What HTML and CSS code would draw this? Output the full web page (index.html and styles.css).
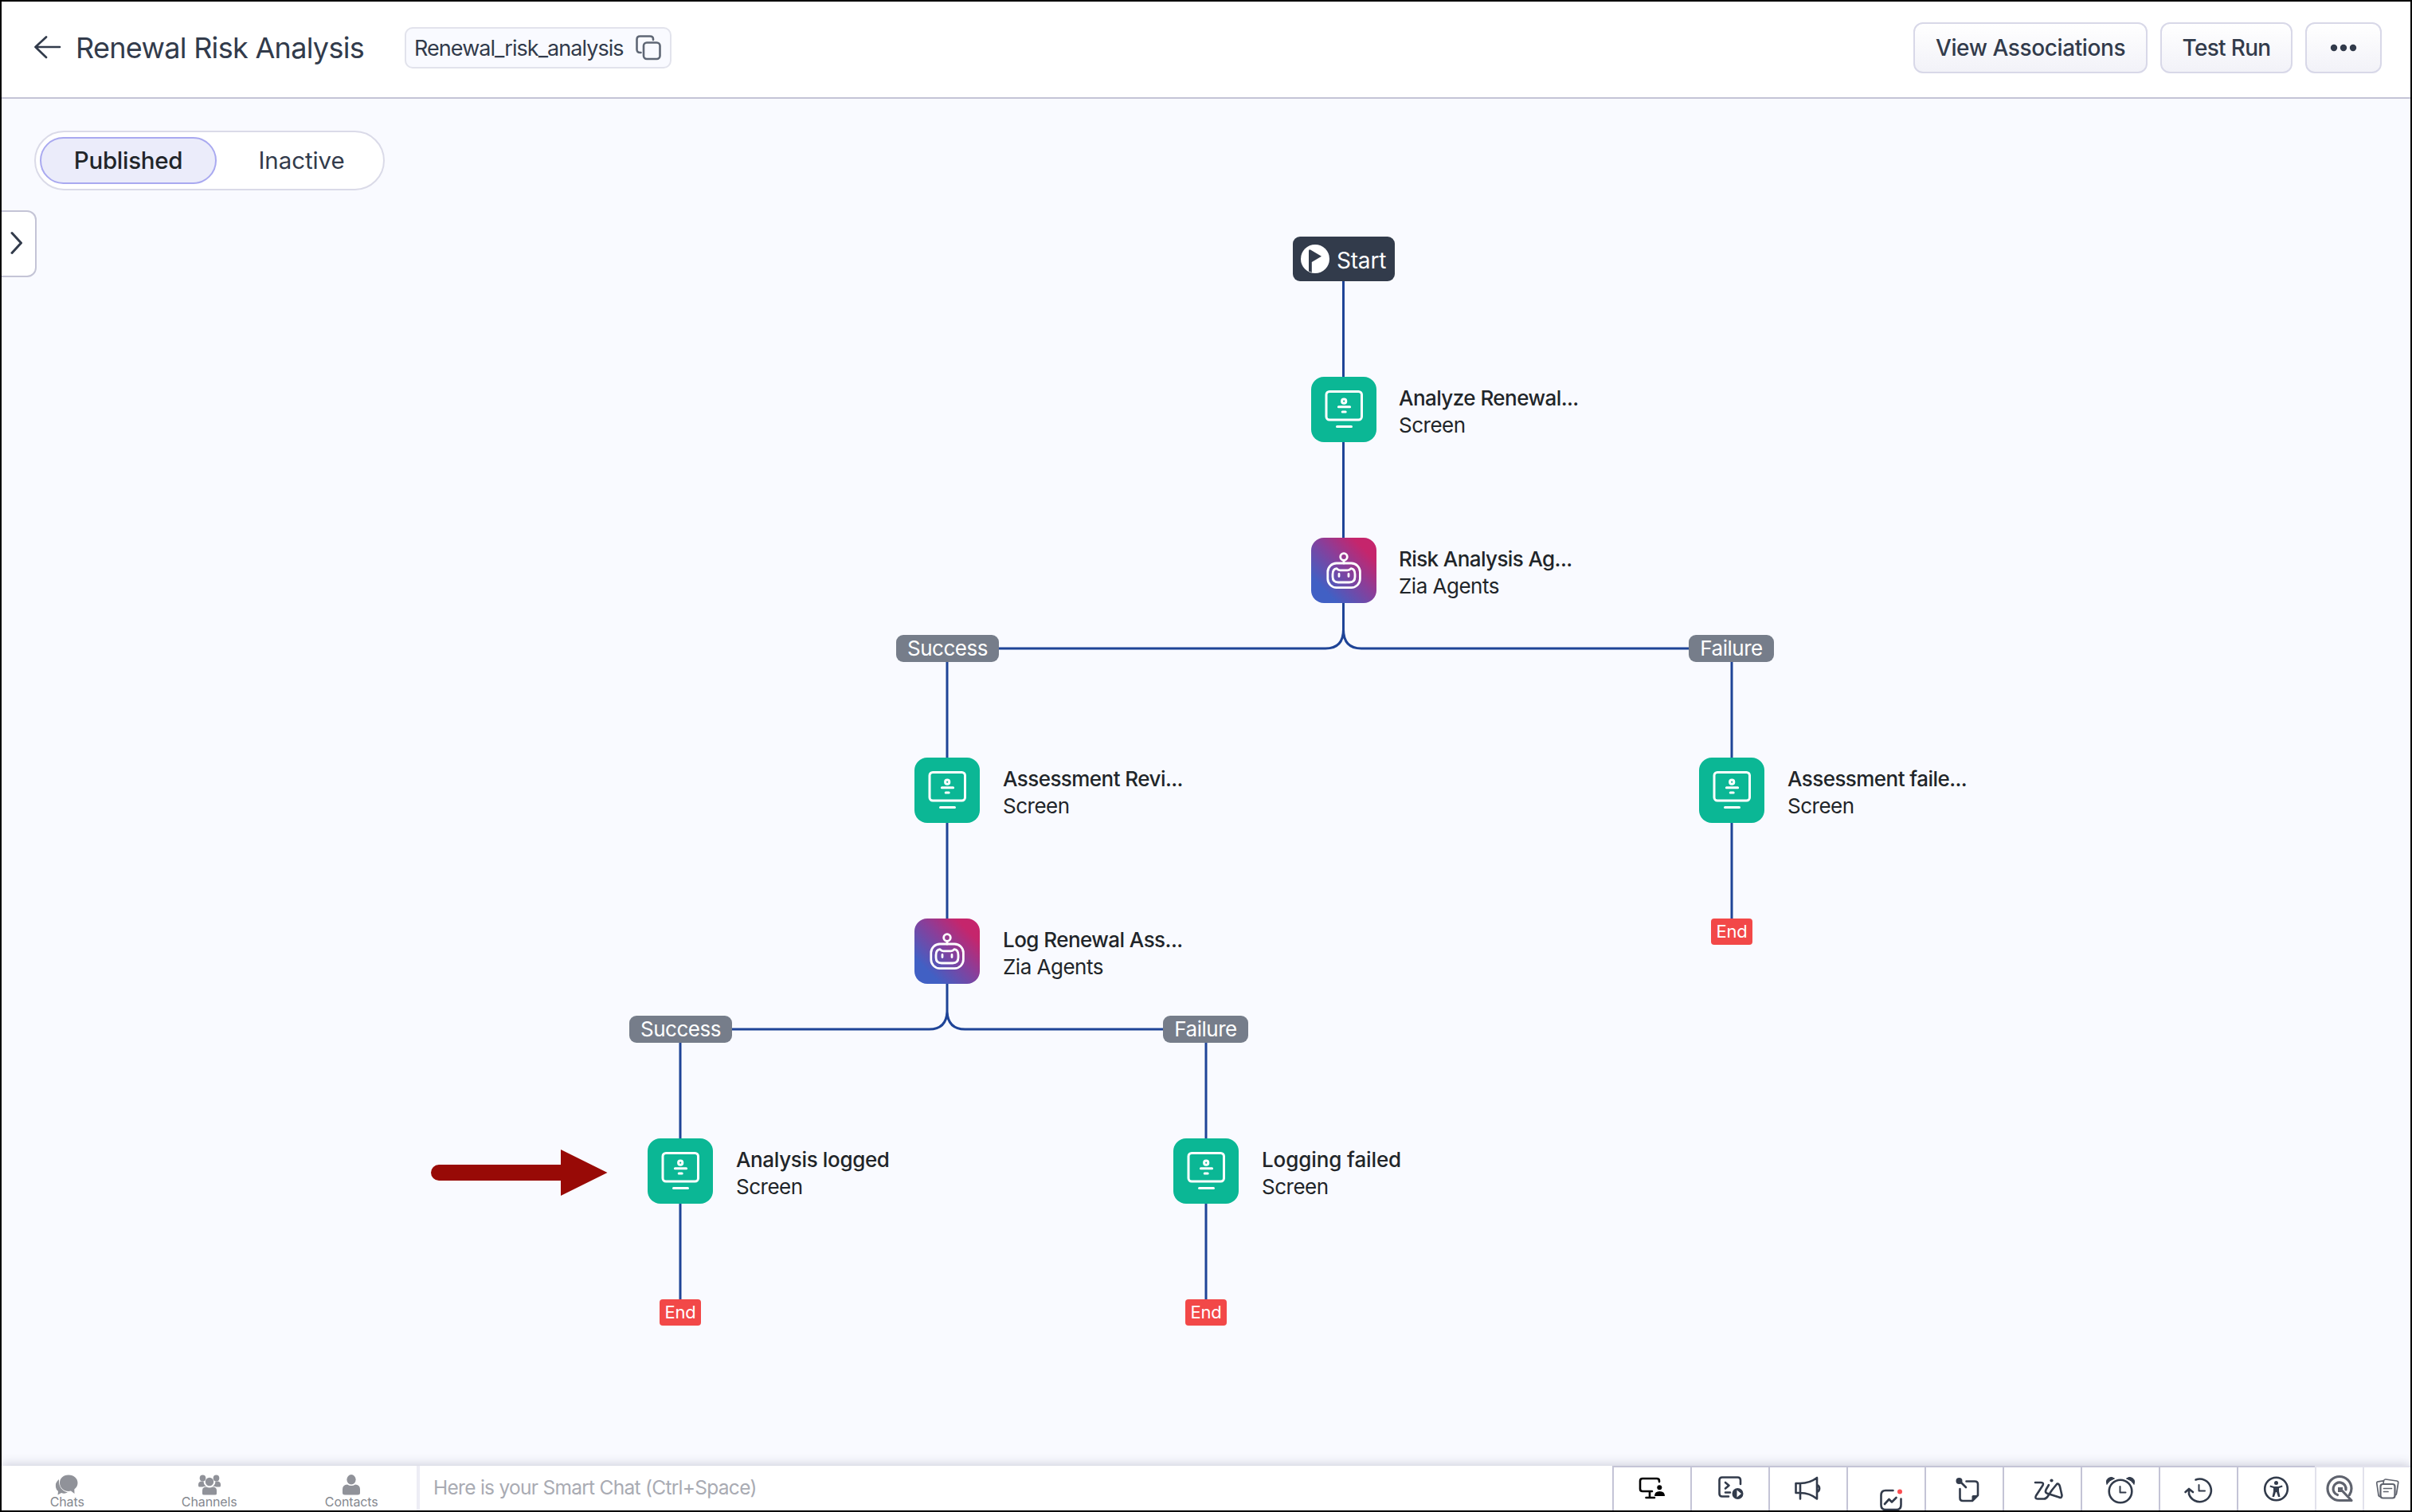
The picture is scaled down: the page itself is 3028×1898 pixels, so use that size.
FILE: index.html
```html
<!DOCTYPE html>
<html lang="en">
<head>
    <meta charset="UTF-8">
    <meta name="viewport" content="width=device-width, initial-scale=1.0">
    <title>Renewal Risk Analysis</title>
    <link rel="stylesheet" href="styles.css">
</head>
<body>
    <!-- Shared icons -->
    <svg class="defs" width="0" height="0">
        <symbol id="icon-screen" viewBox="0 0 82 82">
            <g fill="none" stroke="#fff" stroke-width="3" stroke-linecap="round">
                <rect x="19" y="18.5" width="44.5" height="35.5" rx="4"/>
                <circle cx="41.2" cy="30.7" r="2.6"/>
                <path d="M34.4 37.8H48.6M39.2 44H43.2M32.5 62.6H50.5"/>
            </g>
        </symbol>
        <symbol id="icon-robot" viewBox="0 0 82 82">
            <g fill="none" stroke="#fff" stroke-width="2.8" stroke-linecap="round" stroke-linejoin="round">
                <circle cx="41" cy="24" r="4.3"/>
                <path d="M41 28.5V32"/>
                <rect x="20.8" y="32" width="40.6" height="30.6" rx="11"/>
                <path d="M32 38.6Q34 40.8 36 40.8H46Q48 40.8 50 38.6Q55 39 55 46V49Q55 56 48 56H34Q27 56 27 49V46Q27 39 32 38.6Z"/>
                <path d="M35 45.5V48.5M47 45.5V48.5"/>
            </g>
        </symbol>
    </svg>

    <div class="app">
        <header class="header">
            <svg class="back-icon" width="34" height="30" viewBox="0 0 34 30" fill="none" stroke="#323b4b" stroke-width="2.7" stroke-linecap="round" stroke-linejoin="round">
                <path d="M15 1.500L1.500 14L15 27M1.500 14H32"/>
            </svg>
            <h1 class="title">Renewal Risk Analysis</h1>
            <div class="api-name">
                <span>Renewal_risk_analysis</span>
                <svg width="32" height="32" viewBox="0 0 32 32" fill="none" stroke="#5f6775" stroke-width="2.6" stroke-linecap="round">
                    <rect x="10" y="9.5" width="20.5" height="20.5" rx="4"/>
                    <path d="M6.5 22H5.5Q1.5 22 1.5 18V5.500Q1.500 1.500 5.500 1.500H18Q22 1.500 22 5V6"/>
                </svg>
            </div>
            <div class="actions">
                <button class="btn btn-view">View Associations</button>
                <button class="btn btn-test">Test Run</button>
                <button class="btn btn-more">
                    <svg width="34" height="10" viewBox="0 0 34 10" fill="#323b4b"><circle cx="5" cy="5" r="4.200"/><circle cx="17" cy="5" r="4.200"/><circle cx="29" cy="5" r="4.200"/></svg>
                </button>
            </div>
        </header>

        <main class="canvas">
            <div class="toggle">
                <span class="toggle-item active">Published</span>
                <span class="toggle-item">Inactive</span>
            </div>
            <div class="panel-handle">
                <svg width="16" height="30" viewBox="0 0 16 30" fill="none" stroke="#323b4b" stroke-width="3" stroke-linecap="round" stroke-linejoin="round"><path d="M2 2.500L13.500 15L2 27.500"/></svg>
            </div>

            <!-- Connectors -->
            <svg class="lines" viewBox="2 124 3024 1716" fill="none" stroke="#1f4497" stroke-width="3">
                <path d="M1686.500 353V797M1686.500 790Q1686.500 814 1664 814H1189M1686.500 790Q1686.500 814 1709 814H2174"/>
                <path d="M1189 814V1275M1189 1268Q1189 1292 1166.500 1292H854M1189 1268Q1189 1292 1211.500 1292H1514"/>
                <path d="M854 1292V1640M1514 1292V1640M2174 814V1160"/>
            </svg>

            <div class="start">
                <svg width="36" height="36" viewBox="0 0 36 36"><circle cx="18" cy="18" r="18" fill="#fff"/><path d="M10 8Q10 5.500 12.500 6.800L26 14.800L13.800 22V35L10 33.500Z" fill="#323b4b"/></svg>
                <span>Start</span>
            </div>

            <div class="node analyze">
                <div class="tile screen"><svg><use href="#icon-screen"/></svg></div>
                <div class="node-text"><b>Analyze Renewal...</b><span>Screen</span></div>
            </div>
            <div class="node risk-agent">
                <div class="tile agent"><svg><use href="#icon-robot"/></svg></div>
                <div class="node-text"><b>Risk Analysis Ag...</b><span>Zia Agents</span></div>
            </div>

            <div class="badge success-1">Success</div>
            <div class="badge failure-1">Failure</div>

            <div class="node review">
                <div class="tile screen"><svg><use href="#icon-screen"/></svg></div>
                <div class="node-text"><b>Assessment Revi...</b><span>Screen</span></div>
            </div>
            <div class="node assess-failed">
                <div class="tile screen"><svg><use href="#icon-screen"/></svg></div>
                <div class="node-text"><b>Assessment faile...</b><span>Screen</span></div>
            </div>
            <div class="end end-1">End</div>

            <div class="node log-agent">
                <div class="tile agent"><svg><use href="#icon-robot"/></svg></div>
                <div class="node-text"><b>Log Renewal Ass...</b><span>Zia Agents</span></div>
            </div>

            <div class="badge success-2">Success</div>
            <div class="badge failure-2">Failure</div>

            <div class="node logged">
                <div class="tile screen"><svg><use href="#icon-screen"/></svg></div>
                <div class="node-text"><b>Analysis logged</b><span>Screen</span></div>
            </div>
            <div class="node log-failed">
                <div class="tile screen"><svg><use href="#icon-screen"/></svg></div>
                <div class="node-text"><b>Logging failed</b><span>Screen</span></div>
            </div>
            <div class="end end-2">End</div>
            <div class="end end-3">End</div>

            <svg class="pointer" width="222" height="58" viewBox="0 0 222 58" fill="#980a06"><path d="M10 19H163V0L221.500 29L163 58V39H10A10 10 0 0 1 10 19Z"/></svg>
        </main>

        <footer class="footer">
            <nav class="chat-nav">
                <div class="chat-item">
                    <svg width="30" height="26" viewBox="0 0 30 26" fill="#909299"><path d="M5 6Q0 10 1 16Q1.500 19 4 21L3.500 25.500L8 23Q12 24.500 16 22.500Q4 19 5 6Z"/><path d="M17 .5C10 .5 6 5 6 10.500C6 16.500 11 21 17 21L20 20.600L24.500 24L24.300 18.500C27 16.500 28.500 13.500 28.500 10.500C28.500 5 24 .5 17 .5Z"/></svg>
                    <span>Chats</span>
                </div>
                <div class="chat-item">
                    <svg width="30" height="26" viewBox="0 0 30 26" fill="#909299"><ellipse cx="6.500" cy="4.500" rx="3.800" ry="4"/><ellipse cx="23.500" cy="4.500" rx="3.800" ry="4"/><circle cx="15" cy="9" r="5.200"/><path d="M1 14V12Q1.500 8.500 5 8.500H7.500Q8 13 11 15Q8 14.500 6.500 15.500H2.500Q1 15.500 1 14ZM29 14V12Q28.500 8.500 25 8.500H22.500Q22 13 19 15Q22 14.500 23.500 15.500H27.500Q29 15.500 29 14ZM6 24V20Q6 15.500 11 15.500Q15 17.500 19 15.500Q24 15.500 24 20V24Q24 25.500 22 25.500H8Q6 25.500 6 24Z"/></svg>
                    <span>Channels</span>
                </div>
                <div class="chat-item">
                    <svg width="30" height="26" viewBox="0 0 30 26" fill="#909299"><ellipse cx="15" cy="6.300" rx="5.600" ry="6.200"/><path d="M4 23V18.500Q4 13 10 12.500Q15 15.500 20 12.500Q26 13 26 18.500V23Q26 25.500 23 25.500H7Q4 25.500 4 23Z"/></svg>
                    <span>Contacts</span>
                </div>
            </nav>
            <div class="smart-chat">Here is your Smart Chat (Ctrl+Space)</div>

            <div class="tools">
                <div class="tool">
                    <svg viewBox="0 0 96 54" stroke="#000"><path d="M57 18V17Q57 14 54 14H36Q33 14 33 17V27Q33 30 36 30H48M45 30V37M40.500 38H51"/><path d="M51 36Q51 30 57.500 30Q64 30 64 36Z" fill="#000" stroke="none"/><circle cx="57.300" cy="25.300" r="3" fill="#000" stroke="none"/></svg>
                </div>
                <div class="tool">
                    <svg viewBox="0 0 96 54"><path d="M61 21V16Q61 12.500 57.500 12.500H38Q34.500 12.500 34.500 16V33Q34.500 36.500 38 36.500H46M42 19L46.500 22.700L42 26.500M42 31.500H48"/><circle cx="57.500" cy="33" r="7" fill="#323b4b" stroke="none"/><path d="M56.500 28.500L62 33L56.500 37.500Z" fill="#fff" stroke="none"/></svg>
                </div>
                <div class="tool">
                    <svg viewBox="0 0 96 54"><path d="M38 20H32.500V32H38M38 20V39.500M38 20Q50 20 59 13V39.500Q50 32 38 32M59 22A5.500 5 0 0 1 59 31"/></svg>
                </div>
                <div class="tool">
                    <svg viewBox="0 0 96 54"><path d="M56.500 29H47Q41.500 29 41.500 35V47Q41.500 53 47 53H61Q66.500 53 66.500 47V39.500M46 46L51.500 40L55 43.500L60.500 38"/><circle cx="65" cy="30.500" r="3" fill="#fb4e52" stroke="none"/></svg>
                </div>
                <div class="tool">
                    <svg viewBox="0 0 96 54"><path d="M50.500 17.500H61Q65 17.500 65 21V35L58 42H46Q42.500 42 42.500 38.500V27M42 17L50 25"/><circle cx="41.500" cy="17" r="4" fill="#323b4b" stroke="none"/><path d="M57.500 43V36.500Q57.500 35 59 35H66Z" fill="#323b4b" stroke="none"/></svg>
                </div>
                <div class="tool">
                    <svg viewBox="0 0 96 54"><path d="M39 19H46.500Q50 19 48.500 22.500L40 35.500Q38 39.500 42 39.500H50Q53 39.500 55 36L60 28.500L66.500 20.500Q69 20 70 24L72.500 35Q72.500 39 69 37.500L53.500 32.500Q51 31 52.500 28L56 22"/><circle cx="59.500" cy="16.500" r="2.100" fill="#323b4b" stroke="none"/></svg>
                </div>
                <div class="tool">
                    <svg viewBox="0 0 96 54"><circle cx="48" cy="30" r="14.300"/><path d="M47.500 24V31.500H54.500" stroke-width="2"/><path d="M31 21Q29 16 33 13.500Q37 11 40.500 14Q34 16 31 21ZM65 21Q67 16 63 13.500Q59 11 55.500 14Q62 16 65 21Z" fill="#323b4b" stroke-width="1"/></svg>
                </div>
                <div class="tool">
                    <svg viewBox="0 0 96 54"><path d="M44.500 15.500A14.300 14.300 0 1 1 36 33.500V27M31.500 31L36 27L41 31"/><path d="M48.500 22V29.500H56" stroke-width="2"/></svg>
                </div>
                <div class="tool">
                    <svg viewBox="0 0 96 54"><circle cx="47.500" cy="27" r="14.300"/><circle cx="47.500" cy="19.500" r="2.500" fill="#323b4b" stroke="none"/><path d="M40 22.500L45 24H50L55 22.500L55.500 24.500L51 26V30L52.500 37H50L48 31H47L45 37H42.500L44 30V26L39.500 24.500Z" fill="#323b4b" stroke="none"/></svg>
                </div>
                <div class="tool tool-small">
                    <svg viewBox="0 0 58 54" stroke="#5f636e" stroke-width="3.200"><path d="M44 41.500H29A15 15 0 1 1 44 26.500Q44 31 41.500 34.500M26.500 34.500A8 8 0 1 1 37 28M32 29L44 41.500"/><path d="M27 25H33.500L28 31Z" fill="#5f636e" stroke="none"/><rect x="27" y="25" width="6" height="6" fill="#5f636e" stroke="none"/></svg>
                </div>
                <div class="tool tool-small">
                    <svg viewBox="0 0 58 54" stroke="#5f636e" stroke-width="1.700"><rect x="20.500" y="21" width="18" height="17.500" rx="3" stroke-width="2.200"/><path d="M24.500 26.500H34.500M24.500 30.500H30M20 36.500Q18.500 37 18 35L15.800 20Q15.500 18 17.500 17.800L24 16.800M24 20.500L24.500 17Q25 14.800 27 15L41 17Q43 17.300 42.700 19.500L40.500 33Q40.200 35 38.500 35"/></svg>
                </div>
            </div>
        </footer>
    </div>
</body>
</html>
```
FILE: styles.css
```css
* {
    box-sizing: border-box;
}

body {
    margin: 0;
    font-family: Inter, "Liberation Sans", sans-serif;
    color: #323b4b;
}

.defs {
    position: absolute;
}

.app {
    width: 3028px;
    height: 1898px;
    border: 2px solid #000;
    display: flex;
    flex-direction: column;
    overflow: hidden;
    background-color: #f9faff;
}

/* Header */
.header {
    height: 122px;
    padding: 0 36px 4px 41px;
    display: flex;
    align-items: center;
    background-color: #fff;
    border-bottom: 2px solid #c4c4d6;
}

.back-icon {
    margin-right: 18px;
}

.title {
    margin: 0;
    font-size: 36px;
    font-weight: 400;
    line-height: 44px;
    letter-spacing: -0.7px;
    width: 413px;
    white-space: nowrap;
}

.api-name {
    height: 52px;
    width: 335px;
    padding: 0 11px 0 10px;
    display: flex;
    align-items: center;
    justify-content: space-between;
    font-size: 27px;
    letter-spacing: -0.95px;
    border: 2px solid #e2e3ec;
    border-radius: 10px;
    background-color: #f9faff;
}

.actions {
    margin-left: auto;
    display: flex;
    gap: 16px;
}

.btn {
    height: 64px;
    padding: 0;
    display: flex;
    align-items: center;
    justify-content: center;
    font: 500 28px Inter, sans-serif;
    letter-spacing: -0.4px;
    white-space: nowrap;
    color: #323b4b;
    border: 2px solid #d8d8e8;
    border-radius: 12px;
    background: linear-gradient(#fff, #f2f2f8);
}

.btn-view {
    width: 294px;
}

.btn-test {
    width: 166px;
    letter-spacing: -0.7px;
}

.btn-more {
    width: 96px;
}

/* Canvas */
.canvas {
    flex: 1;
    position: relative;
    padding: 40px 0 0 41px;
}

.toggle {
    width: 440px;
    height: 75px;
    padding: 6px 5px;
    display: flex;
    border: 2px solid #dadae8;
    border-radius: 38px;
    background-color: #fff;
}

.toggle-item {
    flex: none;
    width: 213px;
    padding-bottom: 1px;
    display: flex;
    align-items: center;
    justify-content: center;
    font-size: 29.5px;
    letter-spacing: -0.1px;
}

.toggle-item.active {
    width: 222px;
    height: 59px;
    font-weight: 500;
    letter-spacing: -0.3px;
    color: #212529;
    border: 2px solid #a9a9f0;
    border-radius: 30px;
    background-color: #ebecfa;
}

.panel-handle {
    width: 44px;
    height: 84px;
    margin: 25px 0 0 -41px;
    padding: 0 3px 2px 11px;
    display: flex;
    align-items: center;
    border: 2px solid #c4c4d6;
    border-left: 0;
    border-radius: 0 12px 12px 0;
    background-color: #fff;
}

.lines {
    position: absolute;
    left: 0;
    top: 0;
    width: 3024px;
    height: 1716px;
}

.start, .node, .badge, .end, .pointer {
    position: absolute;
}

.start {
    left: 1621px;
    top: 173px;
    width: 128px;
    height: 56px;
    padding-left: 10px;
    display: flex;
    align-items: center;
    gap: 9px;
    font-size: 28px;
    letter-spacing: -0.2px;
    color: #fff;
    border-radius: 9px;
    background-color: #323b4b;
}

.start span {
    padding-top: 4px;
}

.node {
    display: flex;
    gap: 29px;
    color: #212529;
}

.tile {
    width: 82px;
    height: 82px;
    border-radius: 16px;
}

.tile svg {
    display: block;
    width: 82px;
    height: 82px;
}

.screen {
    background-color: #0bb795;
}

.agent {
    background: linear-gradient(45deg, #4160c4 20%, #8a3e99 55%, #c5256c 82%);
}

.node-text {
    padding-top: 10px;
    display: flex;
    flex-direction: column;
    font-size: 26px;
    line-height: 34px;
    letter-spacing: -0.5px;
    white-space: nowrap;
}

.node-text b {
    font-weight: 500;
    letter-spacing: -0.55px;
}

.analyze { left: 1644px; top: 349px; gap: 28px; }
.risk-agent { left: 1644px; top: 551px; gap: 28px; }
.review { left: 1146px; top: 827px; }
.log-agent { left: 1146px; top: 1029px; }
.logged { left: 811px; top: 1305px; }
.log-failed { left: 1471px; top: 1305px; }
.assess-failed { left: 2131px; top: 827px; }

.risk-agent b {
    letter-spacing: -0.6px;
}

.logged b {
    letter-spacing: -0.35px;
}

.log-failed b {
    letter-spacing: -0.1px;
}

.badge {
    width: 129px;
    height: 34px;
    font-size: 26px;
    line-height: 34px;
    letter-spacing: -0.5px;
    text-align: center;
    color: #fff;
    border-radius: 9px;
    background-color: #767d8a;
}

.success-1 { left: 1123px; top: 673px; }
.success-2 { left: 788px; top: 1151px; }
.failure-1 { left: 2118px; top: 673px; width: 107px; }
.failure-2 { left: 1458px; top: 1151px; width: 107px; }

.end {
    width: 52px;
    height: 33px;
    font-size: 22px;
    line-height: 33px;
    letter-spacing: -0.3px;
    text-align: center;
    color: #fff;
    border-radius: 4px;
    background-color: #f24848;
}

.end-1 { left: 2146px; top: 1029px; }
.end-2 { left: 826px; top: 1507px; }
.end-3 { left: 1486px; top: 1507px; }

.pointer {
    left: 539px;
    top: 1319px;
}

/* Footer */
.footer {
    height: 56px;
    display: flex;
    position: relative;
    background-color: #fff;
    box-shadow: 0 -2px 12px rgba(60, 60, 90, 0.22);
}

.chat-nav {
    width: 525px;
    display: flex;
    gap: 14px;
    border-right: 4px solid #ededf5;
}

.chat-item {
    flex: none;
    width: 164.5px;
    padding-top: 11px;
    display: flex;
    flex-direction: column;
    align-items: center;
    font-size: 16px;
    line-height: 16px;
    letter-spacing: -0.1px;
    color: #85888f;
}

.chat-item svg {
    display: block;
    flex: none;
}

.smart-chat {
    flex: 1;
    padding: 0 0 2px 17px;
    font-size: 24.5px;
    line-height: 54px;
    letter-spacing: -0.72px;
    color: #a9abb3;
}

.tools {
    display: flex;
}

.tool {
    width: 98px;
    height: 56px;
    border-top: 2px solid #c4c4d6;
    border-left: 2px solid #c4c4d6;
}

.tool svg {
    display: block;
    width: 96px;
    height: 54px;
    fill: none;
    stroke-linecap: round;
    stroke-linejoin: round;
}

.tool:not(:first-child, .tool-small) svg {
    stroke: #323b4b;
}

.tool:not(.tool-small) svg {
    stroke-width: 2.6px;
}

.tool-small {
    width: 60px;
    border-color: #e2e2ec;
}

.tool-small svg {
    width: 58px;
}
```
